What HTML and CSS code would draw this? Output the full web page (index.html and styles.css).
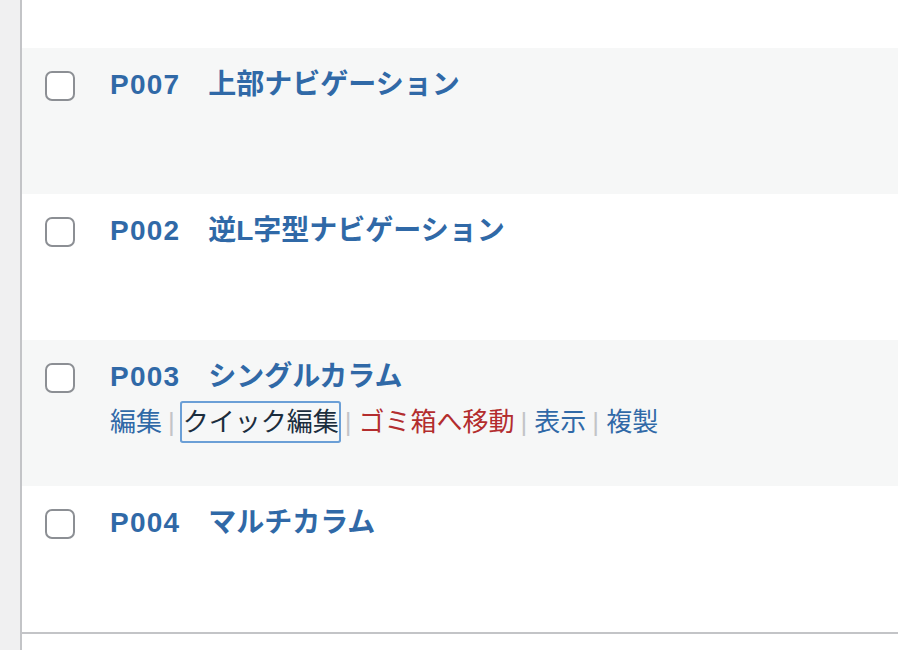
FILE: index.html
```html
<!DOCTYPE html>
<html lang="ja">
<head>
    <meta charset="UTF-8">
    <meta name="viewport" content="width=device-width, initial-scale=1.0">
    <title>固定ページ一覧</title>
    <link rel="stylesheet" href="styles.css">
</head>
<body>
<div class="wrap">
    <div class="gutter"></div>
    <div class="list">
        <div class="list-top"></div>

        <div class="row alt">
            <span class="check"></span>
            <div class="cell">
                <a class="row-title" href="#"><span class="num">P007</span>　上部ナビゲーション</a>
            </div>
        </div>

        <div class="row">
            <span class="check"></span>
            <div class="cell">
                <a class="row-title" href="#"><span class="num">P002</span>　逆L字型ナビゲーション</a>
            </div>
        </div>

        <div class="row alt">
            <span class="check"></span>
            <div class="cell">
                <a class="row-title" href="#"><span class="num">P003</span>　シングルカラム</a>
                <div class="row-actions">
                    <a href="#">編集</a><span class="sep">|</span><a class="focused" href="#">クイック編集</a><span class="sep">|</span><a class="trash" href="#">ゴミ箱へ移動</a><span class="sep">|</span><a href="#">表示</a><span class="sep">|</span><a href="#">複製</a>
                </div>
            </div>
        </div>

        <div class="row">
            <span class="check"></span>
            <div class="cell">
                <a class="row-title" href="#"><span class="num">P004</span>　マルチカラム</a>
            </div>
        </div>
    </div>
</div>
</body>
</html>
```
FILE: styles.css
```css
body {
    margin: 0;
    background: #fff;
    font-family: 'Liberation Sans', 'Noto Sans CJK JP', sans-serif;
}

.wrap {
    display: flex;
    height: 650px;
}

.gutter {
    width: 20px;
    flex: 0 0 20px;
    background: #f0f0f1;
    border-right: 2px solid #c3c4c7;
}

.list {
    flex: 1;
}

.list-top {
    height: 48px;
}

.row {
    display: flex;
    align-items: flex-start;
    height: 146px;
    box-sizing: border-box;
    background: #fff;
}

.row:last-child {
    border-bottom: 2px solid #c3c4c7;
    height: 148px;
}

.row.alt {
    background: #f6f7f7;
}

.check {
    width: 30px;
    height: 30px;
    box-sizing: border-box;
    margin: 23px 0 0 23px;
    border: 2px solid #8c8f94;
    border-radius: 7px;
    background: #fff;
}

.cell {
    padding: 17px 0 0 35px;
}

.row-title {
    display: block;
    font-size: 28px;
    line-height: 40px;
    font-weight: bold;
    color: #3069a7;
    text-decoration: none;
}

.row-title .num {
    letter-spacing: 1.2px;
}

.row-actions {
    margin-top: 5px;
    font-size: 26px;
    line-height: 40px;
    white-space: nowrap;
}

.row-actions a {
    color: #3069a7;
    text-decoration: none;
}

.row-actions a.trash {
    color: #b32d2e;
}

.row-actions a.focused {
    color: #1b2d3d;
    padding: 4px 0 4px 1px;
    box-shadow: 0 0 0 2px #6b9fd6;
    border-radius: 1px;
}

.sep {
    color: #c3c4c7;
    margin: 0 7px 0 6px;
}
```
